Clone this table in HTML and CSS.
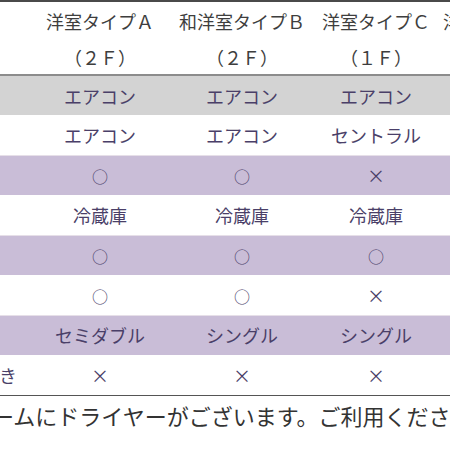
FILE: index.html
```html
<!DOCTYPE html>
<html lang="ja">
<head>
<meta charset="utf-8">
<link rel="stylesheet" href="styles.css">
</head>
<body>
<div class="frame">
  <table class="rooms">
    <colgroup>
      <col class="c-label"><col class="c-a"><col class="c-b"><col class="c-c"><col class="c-d">
    </colgroup>
    <thead>
      <tr class="h1">
        <th></th><th>洋室タイプＡ</th><th>和洋室タイプＢ</th><th>洋室タイプＣ</th><th class="last">洋室タイプＤ</th>
      </tr>
      <tr class="h2">
        <th></th><th>（２Ｆ）</th><th>（２Ｆ）</th><th>（１Ｆ）</th><th class="last">（１Ｆ）</th>
      </tr>
    </thead>
    <tbody>
      <tr class="gray"><th>冷房</th><td>エアコン</td><td>エアコン</td><td>エアコン</td><td>エアコン</td></tr>
      <tr class="white"><th>暖房</th><td>エアコン</td><td>エアコン</td><td>セントラル</td><td>エアコン</td></tr>
      <tr class="purple"><th>加湿器</th><td><span class="mark">○</span></td><td><span class="mark">○</span></td><td>×</td><td><span class="mark">○</span></td></tr>
      <tr class="white"><th>冷蔵庫</th><td>冷蔵庫</td><td>冷蔵庫</td><td>冷蔵庫</td><td>冷蔵庫</td></tr>
      <tr class="purple"><th>金庫</th><td><span class="mark">○</span></td><td><span class="mark">○</span></td><td><span class="mark">○</span></td><td><span class="mark">○</span></td></tr>
      <tr class="white"><th>湯沸し</th><td><span class="mark">○</span></td><td><span class="mark">○</span></td><td>×</td><td><span class="mark">○</span></td></tr>
      <tr class="purple"><th>ベッドタイプ</th><td>セミダブル</td><td>シングル</td><td>シングル</td><td>シングル</td></tr>
      <tr class="white"><th>バス・トイレ付き</th><td>×</td><td>×</td><td>×</td><td>×</td></tr>
    </tbody>
  </table>
  <p class="note">※バスルームにドライヤーがございます。ご利用ください。</p>
</div>
</body>
</html>
```

FILE: styles.css
```css
html, body {
  margin: 0;
  padding: 0;
  background: #ffffff;
}

.frame {
  width: 450px;
  height: 450px;
  overflow: hidden;
  font-family: "Noto Sans CJK JP", "Noto Sans", sans-serif;
}

.rooms {
  margin-left: -128px;
  border-collapse: collapse;
  table-layout: fixed;
  width: 706px;
  border-top: 2px solid #4a4a4a;
  border-bottom: 1px solid #555555;
  font-size: 18px;
  line-height: 1;
}

.c-label { width: 158px; }
.c-a { width: 140px; }
.c-b { width: 144px; }
.c-c { width: 124px; }
.c-d { width: 140px; }

.rooms th,
.rooms td {
  padding: 0;
  text-align: center;
  white-space: nowrap;
  font-weight: normal;
}

.rooms thead th {
  color: #3e3e3e;
}

.rooms thead th.last {
  text-align: left;
  padding-left: 5px;
}

.h1 { height: 38px; }
.h2 { height: 36px; }
.h2 th { border-bottom: 2px solid #8c8c8c; }

.rooms tbody tr { height: 40px; }

.rooms tbody th,
.rooms tbody td {
  color: #4a3f68;
}

.rooms tbody th {
  padding-right: 12px;
}

.mark {
  font-size: 16px;
}

.gray { background: #d3d3d3; }
.white { background: #ffffff; }
.purple { background: #c9bdd7; }
.purple th, .purple td { box-shadow: inset 0 1px 0 #e6dfe8; }

.note {
  margin: 6px 0 0 -96px;
  font-size: 22px;
  line-height: 1.2;
  color: #333333;
  white-space: nowrap;
}
```
